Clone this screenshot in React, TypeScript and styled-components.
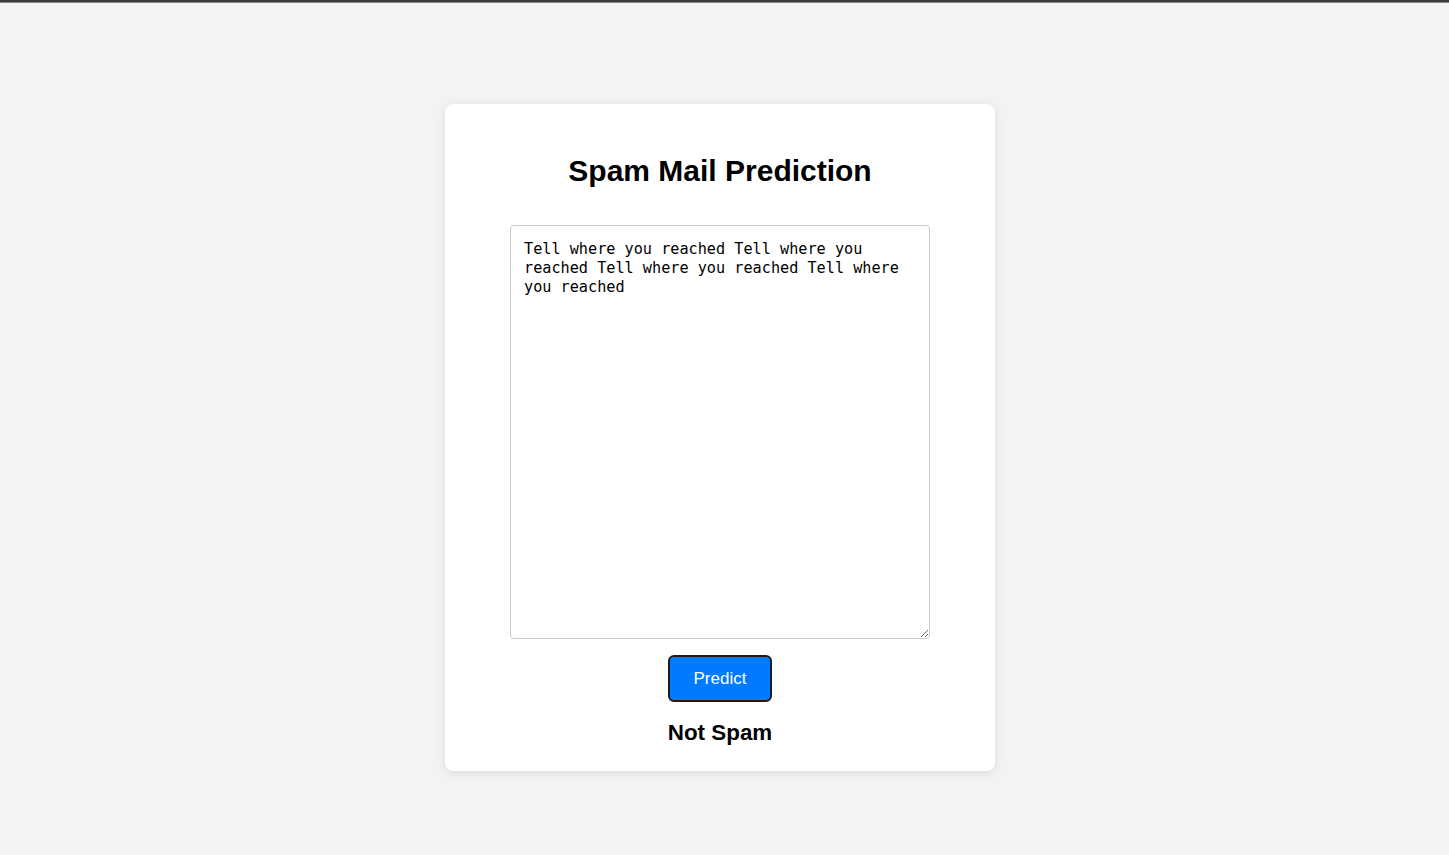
import React, { useState } from "react";
import styled, { createGlobalStyle } from "styled-components";

const GlobalStyle = createGlobalStyle`
  html, body {
    margin: 0;
    padding: 0;
    background: #f3f3f3;
    font-family: "Liberation Sans", Arial, sans-serif;
  }
`;

const Page = styled.div`
  min-height: 855px;
  box-sizing: border-box;
  padding-right: 9px;
  display: flex;
  flex-direction: column;
  align-items: center;
`;

const TopBar = styled.div`
  align-self: stretch;
  margin-right: -9px;
  height: 2px;
  background: #3a3a3a;
  border-bottom: 1px solid #8a8a8a;
`;

const Card = styled.main`
  margin-top: 101px;
  width: 550px;
  box-sizing: border-box;
  padding: 50px 65px 25px;
  background: #ffffff;
  border-radius: 8px;
  box-shadow: 0 2px 10px rgba(0, 0, 0, 0.1);
  display: flex;
  flex-direction: column;
  align-items: center;
`;

const Title = styled.h1`
  margin: 0 0 36px;
  font-size: 30px;
  line-height: 34.5px;
  font-weight: 700;
  color: #000;
  text-align: center;
`;

const MailInput = styled.textarea`
  width: 420px;
  height: 414px;
  box-sizing: border-box;
  padding: 14px 11px 10px 13px;
  border: 1px solid #cccccc;
  border-radius: 4px;
  font-family: "DejaVu Sans Mono", "Liberation Mono", monospace;
  font-size: 15.2px;
  line-height: 19px;
  color: #000;
  background: #fff;
  resize: both;
  outline: none;
`;

const PredictButton = styled.button`
  margin-top: 16px;
  width: 104px;
  height: 47px;
  box-sizing: border-box;
  padding: 2px 0 0;
  border: 2px solid #1a1a1a;
  border-radius: 6px;
  background: #007bff;
  color: #ffffff;
  font-family: "Liberation Sans", Arial, sans-serif;
  font-size: 17px;
  cursor: pointer;
`;

const Result = styled.h2`
  margin: 18px 0 0;
  font-size: 22.4px;
  line-height: 26px;
  font-weight: 700;
  color: #000;
`;

export default function App() {
  const [text, setText] = useState(
    "Tell where you reached Tell where you reached Tell where you reached Tell where you reached"
  );
  return (
    <>
      <GlobalStyle />
      <Page>
        <TopBar />
        <Card>
          <Title>Spam Mail Prediction</Title>
          <MailInput value={text} onChange={(e) => setText(e.target.value)} />
          <PredictButton type="button">Predict</PredictButton>
          <Result>Not Spam</Result>
        </Card>
      </Page>
    </>
  );
}
